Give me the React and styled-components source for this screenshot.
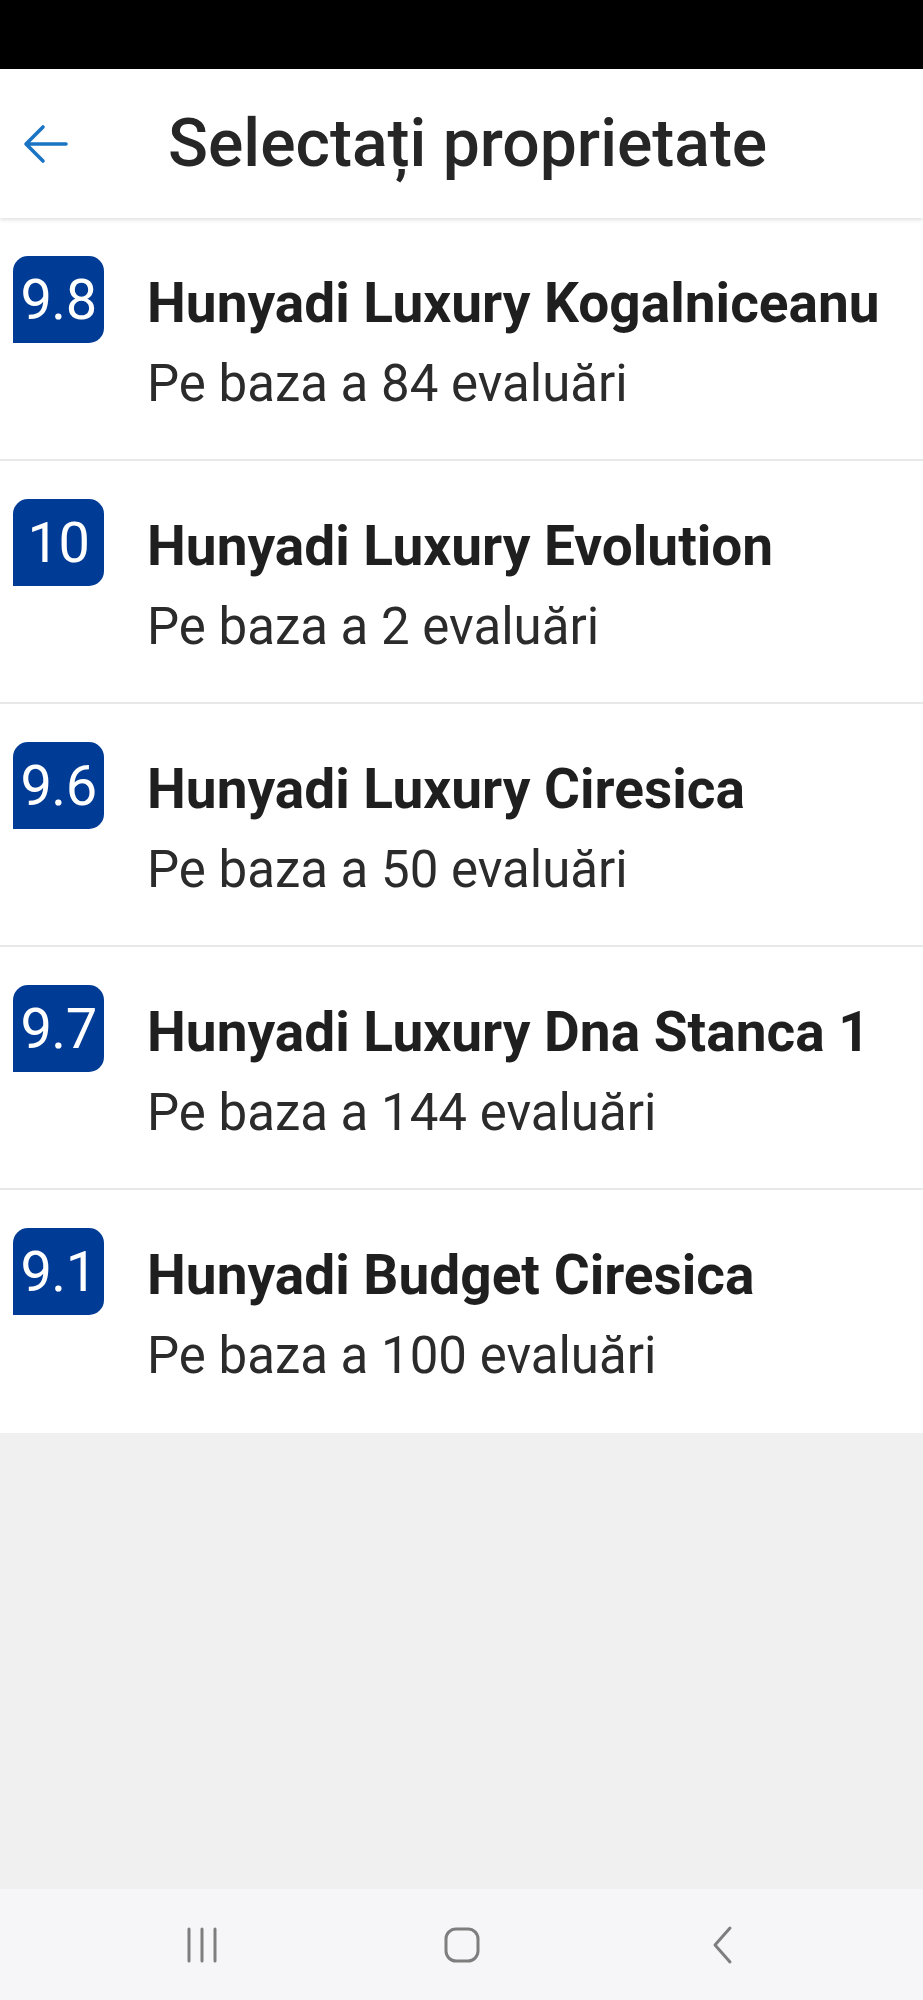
import React from 'react';
import styled, { createGlobalStyle } from 'styled-components';

const GlobalStyle = createGlobalStyle`
  html, body {
    margin: 0;
    padding: 0;
    background: #f0f0f0;
  }
  body {
    font-family: Roboto, 'Noto Sans', sans-serif;
  }
`;

const Screen = styled.div`
  width: 923px;
  height: 2000px;
  display: flex;
  flex-direction: column;
  background: #f0f0f0;
  overflow: hidden;
`;

const StatusBar = styled.div`
  height: 69px;
  background: #000;
  flex-shrink: 0;
`;

const Header = styled.header`
  height: 149px;
  flex-shrink: 0;
  display: flex;
  align-items: center;
  background: #fff;
  box-shadow: 0 2px 4px rgba(0, 0, 0, 0.12);
  position: relative;
  z-index: 1;
`;

const BackButton = styled.button`
  width: 168px;
  height: 100%;
  padding: 0 0 0 22px;
  border: none;
  background: transparent;
  display: flex;
  align-items: center;
  color: #1a74c4;
`;

const Title = styled.h1`
  margin: 0;
  font-size: 66px;
  font-weight: 500;
  color: #262626;
`;

const List = styled.ul`
  list-style: none;
  margin: 0;
  padding: 0;
  background: #fff;
`;

const Row = styled.li`
  height: 243px;
  box-sizing: border-box;
  display: flex;
  align-items: flex-start;
  padding: 38px 20px 0 13px;
  border-bottom: ${(p) => (p.last ? 'none' : '2px solid #e8e8e8')};
`;

const Badge = styled.div`
  width: 91px;
  height: 87px;
  flex-shrink: 0;
  background: #003b95;
  color: #fff;
  border-radius: 15px 15px 15px 0;
  display: flex;
  align-items: center;
  justify-content: center;
  font-size: 56px;
  font-weight: 400;
  letter-spacing: -0.5px;
`;

const Info = styled.div`
  margin: 15px 0 0 43px;
  display: flex;
  flex-direction: column;
`;

const Name = styled.div`
  font-size: 55px;
  font-weight: 700;
  color: #1f1f1f;
  line-height: 64px;
  white-space: nowrap;
`;

const Reviews = styled.div`
  font-size: 51px;
  color: #2b2b2b;
  line-height: 60px;
  margin-top: 19px;
`;

const Filler = styled.div`
  flex: 1;
  background: #f0f0f0;
`;

const NavBar = styled.nav`
  height: 111px;
  flex-shrink: 0;
  background: #f6f6f8;
  display: grid;
  grid-template-columns: repeat(3, 260px);
  justify-content: center;
  align-items: center;
`;

const NavSlot = styled.div`
  display: flex;
  justify-content: center;
  color: #7e7e7e;
`;

const properties = [
  { score: '9.8', name: 'Hunyadi Luxury Kogalniceanu', reviews: 84 },
  { score: '10', name: 'Hunyadi Luxury Evolution', reviews: 2 },
  { score: '9.6', name: 'Hunyadi Luxury Ciresica', reviews: 50 },
  { score: '9.7', name: 'Hunyadi Luxury Dna Stanca 1', reviews: 144 },
  { score: '9.1', name: 'Hunyadi Budget Ciresica', reviews: 100 },
];

export default function App() {
  return (
    <>
      <GlobalStyle />
      <Screen>
        <StatusBar />
        <Header>
          <BackButton aria-label="Înapoi">
            <svg width="48" height="44" viewBox="0 0 48 44" fill="none">
              <path
                d="M44 22H5M21 5L4 22l17 17"
                stroke="currentColor"
                strokeWidth="3.6"
                strokeLinecap="round"
                strokeLinejoin="round"
              />
            </svg>
          </BackButton>
          <Title>Selectați proprietate</Title>
        </Header>
        <List>
          {properties.map((p, i) => (
            <Row key={p.name} last={i === properties.length - 1}>
              <Badge>{p.score}</Badge>
              <Info>
                <Name>{p.name}</Name>
                <Reviews>Pe baza a {p.reviews} evaluări</Reviews>
              </Info>
            </Row>
          ))}
        </List>
        <Filler />
        <NavBar>
          <NavSlot>
            <svg width="34" height="38" viewBox="0 0 34 38">
              <path d="M4 3v32M17 3v32M30 3v32" stroke="currentColor" strokeWidth="3" strokeLinecap="round" />
            </svg>
          </NavSlot>
          <NavSlot>
            <svg width="38" height="38" viewBox="0 0 38 38">
              <rect x="3" y="3" width="32" height="32" rx="10" fill="none" stroke="currentColor" strokeWidth="3" />
            </svg>
          </NavSlot>
          <NavSlot>
            <svg width="24" height="40" viewBox="0 0 24 40">
              <path d="M20 3L5 20l15 17" fill="none" stroke="currentColor" strokeWidth="3" strokeLinecap="round" strokeLinejoin="round" />
            </svg>
          </NavSlot>
        </NavBar>
      </Screen>
    </>
  );
}
